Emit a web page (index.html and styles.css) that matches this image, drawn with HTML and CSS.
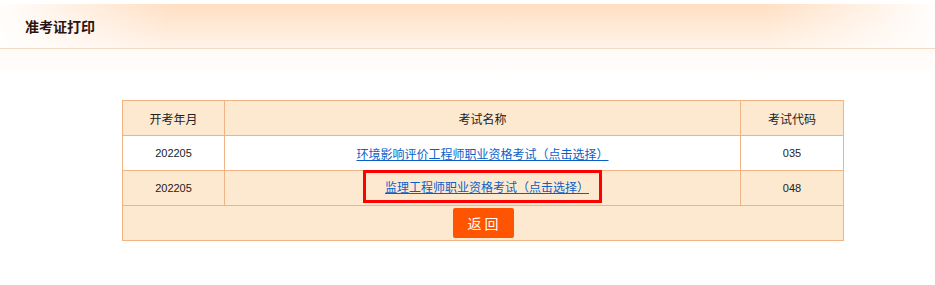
FILE: index.html
```html
<!DOCTYPE html>
<html lang="zh-CN">
<head>
    <meta charset="UTF-8">
    <title>准考证打印</title>
    <link rel="stylesheet" href="styles.css">
</head>
<body>
    <div class="top-bar">
        <h2 class="title">准考证打印</h2>
    </div>
    <div class="content">
        <table class="exam-table">
            <colgroup>
                <col class="c1">
                <col class="c2">
                <col class="c3">
            </colgroup>
            <tr class="head">
                <th>开考年月</th>
                <th>考试名称</th>
                <th>考试代码</th>
            </tr>
            <tr class="odd">
                <td class="num">202205</td>
                <td><a href="#">环境影响评价工程师职业资格考试（点击选择）</a></td>
                <td class="num">035</td>
            </tr>
            <tr class="even">
                <td class="num">202205</td>
                <td><span class="mark"><a href="#">监理工程师职业资格考试（点击选择）</a></span></td>
                <td class="num">048</td>
            </tr>
            <tr class="foot">
                <td colspan="3"><button class="btn-back">返 回</button></td>
            </tr>
        </table>
    </div>
</body>
</html>
```

FILE: styles.css
```css
body { margin: 0; background: #fff; font-family: "Noto Sans CJK SC", "Liberation Sans", sans-serif; }

.top-bar {
    margin-top: 4px;
    height: 44px;
    border-bottom: 1px solid #f1dac6;
    background:
        linear-gradient(to right, rgba(255,255,255,0.95) 0%, rgba(255,255,255,0) 18%, rgba(255,255,255,0) 82%, rgba(255,255,255,0.95) 100%),
        linear-gradient(to bottom, #ffdfc3 0%, #fff3e8 100%);
    display: flex; align-items: center;
    padding-left: 25px;
}
.title { margin: 0; font-size: 14px; font-weight: bold; color: #2a1410; }

.content {
    padding-top: 51px;
    background: linear-gradient(to bottom, #fffaf6 0px, #fff 28px);
}

.exam-table {
    margin-left: 122px;
    width: 722px;
    border-collapse: collapse;
    table-layout: fixed;
    font-size: 12px;
    color: #222;
}
.c1 { width: 102px; }
.c2 { width: 516px; }
.c3 { width: 103px; }

.exam-table th, .exam-table td {
    border: 1px solid #eeb486;
    height: 34px;
    padding: 0;
    text-align: center;
    font-weight: normal;
}
.head, .even, .foot { background: #fde9d0; }
.odd { background: #fff; }
.num { font-family: "Liberation Sans", Arial, sans-serif; font-size: 11px; }

.exam-table a { color: #0a5fc8; text-decoration: underline; }

.mark {
    display: inline-block;
    border: 3px solid #f00;
    line-height: 27px;
    padding: 0 10px 0 19px;
    position: relative; top: -2px;
}

.btn-back {
    width: 61px; height: 30px;
    border: none; border-radius: 2px;
    background: #ff5400;
    color: #fff;
    font-family: "Noto Sans CJK SC", sans-serif;
    font-size: 14px;
    vertical-align: middle;
}
```
